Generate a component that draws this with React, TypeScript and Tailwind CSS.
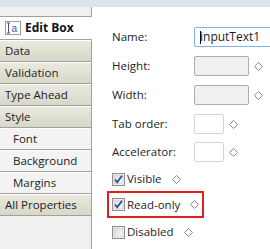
import React from "react";

const Diamond = () => (
  <svg width="9" height="9" viewBox="0 0 9 9" className="block">
    <polygon points="4.5,0.5 8.5,4.5 4.5,8.5 0.5,4.5" fill="#fff" stroke="#8a8a8a" strokeWidth="1" />
  </svg>
);

const Check = ({ checked }: { checked: boolean }) => (
  <svg width="13" height="13" viewBox="0 0 13 13" className="block shrink-0">
    <defs>
      <linearGradient id="cbg" x1="0" y1="0" x2="1" y2="1">
        <stop offset="0" stopColor="#dcdcdc" />
        <stop offset="1" stopColor="#f8f8f8" />
      </linearGradient>
    </defs>
    <rect x="0.5" y="0.5" width="12" height="12" fill="#fff" stroke="#8e8f8f" />
    <rect x="2" y="2" width="9" height="9" fill="url(#cbg)" stroke="#b8b8b8" strokeWidth="0.6" />
    {checked && (
      <path d="M3 6.5 L5.2 9.2 L10 2.8" fill="none" stroke="#2c4e9c" strokeWidth="1.8" />
    )}
  </svg>
);

const EditIcon = () => (
  <svg width="16" height="16" viewBox="0 0 16 16" className="block">
    <rect x="0.5" y="1.5" width="15" height="13" fill="#fff" stroke="#9a9a9a" />
    <path d="M2 3 H5 M3.5 3 V13 M2 13 H5" stroke="#555" strokeWidth="1" fill="none" />
    <text x="6.5" y="12" fontSize="10" fontFamily="Liberation Sans, sans-serif" fill="#2a5db0">a</text>
  </svg>
);

const mainTab = "bg-gradient-to-b from-[#e9e9df] to-[#d8d8c8] pl-[5px]";
const subTab = "bg-[#f3f3f3] pl-[13px]";

const tabs: { label: string; sub: boolean }[] = [
  { label: "Data", sub: false },
  { label: "Validation", sub: false },
  { label: "Type Ahead", sub: false },
  { label: "Style", sub: false },
  { label: "Font", sub: true },
  { label: "Background", sub: true },
  { label: "Margins", sub: true },
  { label: "All Properties", sub: false },
];

export default function App() {
  return (
    <div
      className="w-[270px] h-[249px] overflow-hidden bg-white flex flex-col text-[11.5px] text-[#1c1c28] whitespace-nowrap"
      style={{ fontFamily: '"Open Sans", "Noto Sans", sans-serif' }}
    >
      <div className="h-[7px] bg-[#dfe3ec] shrink-0" />
      <div className="flex flex-1 min-h-0">
        {/* Left panel */}
        <div className="w-[92px] shrink-0 flex flex-col">
          <div className="h-[10px] bg-[#f0f0f0] border-r border-b border-[#a0a0a0]" />
          <div className="h-[22px] flex items-center gap-[4px] pl-[5px] bg-white">
            <EditIcon />
            <span className="font-bold text-[12px] text-[#101018]">Edit Box</span>
          </div>
          <div className="border-r border-[#a0a0a0] flex flex-col">
            {tabs.map((t) => (
              <div key={t.label} className="border-t border-[#a0a0a0]">
                <div className="border-t border-white">
                  <div className={`h-[20px] flex items-center leading-none ${t.sub ? subTab : mainTab}`}>
                    {t.label}
                  </div>
                </div>
              </div>
            ))}
            <div className="border-t border-[#a0a0a0]" />
          </div>
          <div className="flex-1 bg-[#f0f0f0] border-r border-[#a0a0a0]" />
        </div>

        {/* Right panel */}
        <div className="flex-1 min-w-0 bg-white pl-[20px] pt-[20px] flex flex-col">
          <div className="flex items-center h-[20px]">
            <span className="w-[82px] shrink-0">Name:</span>
            <div className="h-[20px] flex-1 -mr-[4px] border border-[#7eb4ea] rounded-[2px] flex items-center pl-[5px] text-[#1c1c28]">
              <span className="w-px h-[13px] bg-black mr-[-1px]" />
              <span className="text-[12px]">inputText1</span>
            </div>
          </div>
          <div className="flex items-center h-[20px] mt-[9px]">
            <span className="w-[82px] shrink-0">Height:</span>
            <div className="w-[55px] h-[20px] bg-[#f0f0f0] border border-[#adadad] rounded-[2px]" />
            <div className="ml-[5px]"><Diamond /></div>
          </div>
          <div className="flex items-center h-[20px] mt-[9px]">
            <span className="w-[82px] shrink-0">Width:</span>
            <div className="w-[55px] h-[20px] bg-[#f0f0f0] border border-[#adadad] rounded-[2px]" />
            <div className="ml-[5px]"><Diamond /></div>
          </div>
          <div className="flex items-center h-[20px] mt-[9px]">
            <span className="w-[82px] shrink-0">Tab order:</span>
            <div className="w-[30px] h-[20px] bg-white border border-[#d5d5d5] rounded-[2px]" />
            <div className="ml-[5px]"><Diamond /></div>
          </div>
          <div className="flex items-center h-[20px] mt-[8px]">
            <span className="w-[82px] shrink-0">Accelerator:</span>
            <div className="w-[30px] h-[20px] bg-white border border-[#d5d5d5] rounded-[2px]" />
            <div className="ml-[5px]"><Diamond /></div>
          </div>
          <div className="flex items-center h-[14px] mt-[10px]">
            <Check checked />
            <span className="ml-[2px]">Visible</span>
            <div className="ml-[10px]"><Diamond /></div>
          </div>
          <div className="-ml-[5px] mt-[5px] w-[97px] h-[27px] border-2 border-[#e41e1e] flex items-center pl-[3px]">
            <Check checked />
            <span className="ml-[2px]">Read-only</span>
            <div className="ml-[10px]"><Diamond /></div>
          </div>
          <div className="flex items-center h-[14px] mt-[7px]">
            <Check checked={false} />
            <span className="ml-[2px]">Disabled</span>
            <div className="ml-[10px]"><Diamond /></div>
          </div>
        </div>
      </div>
    </div>
  );
}
